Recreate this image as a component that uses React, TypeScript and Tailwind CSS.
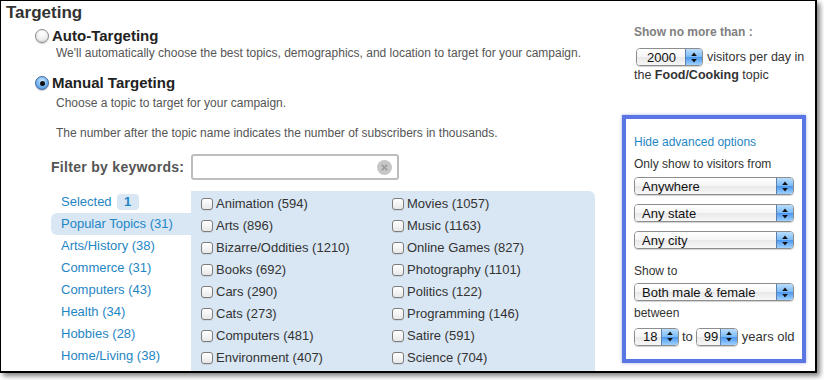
import React from "react";

const leftTopics = [
  "Animation (594)",
  "Arts (896)",
  "Bizarre/Oddities (1210)",
  "Books (692)",
  "Cars (290)",
  "Cats (273)",
  "Computers (481)",
  "Environment (407)",
];

const rightTopics = [
  "Movies (1057)",
  "Music (1163)",
  "Online Games (827)",
  "Photography (1101)",
  "Politics (122)",
  "Programming (146)",
  "Satire (591)",
  "Science (704)",
];

const categories = [
  "Arts/History (38)",
  "Commerce (31)",
  "Computers (43)",
  "Health (34)",
  "Hobbies (28)",
  "Home/Living (38)",
];

function Stepper() {
  return (
    <div className="w-[17px] h-full flex items-center justify-center border-l border-[#5d7fae] bg-[linear-gradient(to_bottom,#b9ddfc_0%,#7dbcf7_48%,#4c97ee_52%,#9fd2ff_100%)]">
      <svg width="6" height="11" viewBox="0 0 6 11">
        <path d="M3 0.5 L5.8 4 L0.2 4 Z" fill="#111" />
        <path d="M3 10.5 L5.8 7 L0.2 7 Z" fill="#111" />
      </svg>
    </div>
  );
}

function AquaSelect({ label, className, textClass }: { label: string; className: string; textClass?: string }) {
  return (
    <div
      className={`flex shrink-0 h-[18px] rounded-[4px] border border-[#8d8d8d] overflow-hidden shadow-[0_1px_1px_rgba(0,0,0,0.18)] ${className}`}
    >
      <div
        className={`flex-1 flex items-center text-[13px] leading-none text-[#111] whitespace-nowrap bg-[linear-gradient(to_bottom,#ffffff_0%,#f6f6f6_48%,#e9e9e9_52%,#f7f7f7_100%)] ${textClass ?? "pl-[7px]"}`}
      >
        {label}
      </div>
      <Stepper />
    </div>
  );
}

function Checkbox() {
  return (
    <span className="w-[12px] h-[12px] shrink-0 rounded-[3px] border border-[#7d7d7d] bg-[linear-gradient(to_bottom,#ffffff,#e8e8e8)] shadow-[0_1px_0_rgba(0,0,0,0.08)]" />
  );
}

export default function App() {
  return (
    <div
      className="w-[824px] h-[380px] bg-white overflow-hidden"
      style={{ fontFamily: '"Liberation Sans", Arial, sans-serif' }}
    >
      <div className="w-[817px] h-[373px] border-l border-t border-r-2 border-b-2 border-black bg-white overflow-hidden flex shadow-[3px_3px_5px_rgba(0,0,0,0.5)]">
        {/* Left column */}
        <div className="w-[594px] shrink-0 flex flex-col">
          <div className="pl-[5px] pt-[2px] h-[26px] text-[17px] leading-[20px] font-bold text-[#333]">
            Targeting
          </div>

          <div className="pl-[34px] flex items-center h-[18px] gap-[3px]">
            <span className="w-[14px] h-[14px] rounded-full border border-[#8a8a8a] bg-[radial-gradient(circle_at_50%_30%,#ffffff_0%,#eeeeee_55%,#c9c9c9_100%)] shadow-[0_1px_1px_rgba(0,0,0,0.2)]" />
            <span className="text-[15px] font-bold text-[#222]">Auto-Targeting</span>
          </div>
          <div className="pl-[55px] h-[16px] text-[12px] leading-[16px] text-[#555]">
            We'll automatically choose the best topics, demographics, and location to target for your campaign.
          </div>

          <div className="mt-[13px] pl-[34px] flex items-center h-[18px] gap-[3px]">
            <span className="w-[14px] h-[14px] rounded-full border border-[#44689c] flex items-center justify-center bg-[radial-gradient(circle_at_50%_35%,#d4ecff_0%,#7ab9f2_50%,#3a82da_100%)] shadow-[0_1px_1px_rgba(0,0,0,0.2)]">
              <span className="w-[5px] h-[5px] rounded-full bg-[#111]" />
            </span>
            <span className="text-[15px] font-bold text-[#222]">Manual Targeting</span>
          </div>
          <div className="mt-[3px] pl-[55px] h-[16px] text-[12px] leading-[16px] text-[#555]">
            Choose a topic to target for your campaign.
          </div>
          <div className="mt-[14px] pl-[55px] h-[16px] text-[12px] leading-[16px] text-[#555]">
            The number after the topic name indicates the number of subscribers in thousands.
          </div>

          <div className="mt-[13px] flex items-center h-[26px]">
            <span className="pl-[50px] w-[190px] text-[14px] font-bold text-[#555] tracking-[0.3px]">
              Filter by keywords:
            </span>
            <div className="w-[208px] h-[26px] rounded-[3px] border-2 border-[#bdbdbd] bg-white flex items-center justify-end pr-[5px]">
              <svg width="15" height="15" viewBox="0 0 15 15">
                <circle cx="7.5" cy="7.5" r="7.5" fill="#c6c6c6" />
                <path d="M4.8 4.8 L10.2 10.2 M10.2 4.8 L4.8 10.2" stroke="#9a9a9a" strokeWidth="1.6" />
              </svg>
            </div>
          </div>

          <div className="mt-[11px] flex flex-1">
            {/* Category nav */}
            <div className="pl-[50px] w-[190px] shrink-0 flex flex-col text-[13px] text-[#1f86c4]">
              <div className="h-[22px] flex items-center pl-[10px]">
                <span>Selected</span>
                <span className="ml-[5px] h-[16px] w-[22px] rounded-[4px] bg-[#d9e7f4] flex items-center justify-center font-bold text-[13px]">
                  1
                </span>
              </div>
              <div className="h-[22px] flex items-center pl-[10px] rounded-l-[6px] bg-[#d9e7f4]">
                Popular Topics (31)
              </div>
              {categories.map((c) => (
                <div key={c} className="h-[22px] flex items-center pl-[10px]">
                  {c}
                </div>
              ))}
            </div>

            {/* Topic panel */}
            <div className="flex-1 bg-[#d9e7f4] rounded-tr-[6px] pl-[10px] pt-[2px] flex text-[13px] text-[#333]">
              <div className="w-[191px] flex flex-col">
                {leftTopics.map((t) => (
                  <div key={t} className="h-[22px] flex items-center gap-[3px]">
                    <Checkbox />
                    <span>{t}</span>
                  </div>
                ))}
              </div>
              <div className="flex flex-col">
                {rightTopics.map((t) => (
                  <div key={t} className="h-[22px] flex items-center gap-[3px]">
                    <Checkbox />
                    <span>{t}</span>
                  </div>
                ))}
              </div>
            </div>
          </div>
        </div>

        {/* Right column */}
        <div className="ml-[27px] w-[184px] shrink-0 flex flex-col">
          <div className="pl-[12px] mt-[23px] h-[16px] text-[12px] leading-[16px] font-bold text-[#808080]">
            Show no more than :
          </div>
          <div className="pl-[14px] mt-[8px] h-[18px] flex items-center gap-[4px] text-[12.5px] text-[#333] whitespace-nowrap">
            <AquaSelect label="2000" className="w-[67px]" textClass="pl-[10px]" />
            <span>visitors per day in</span>
          </div>
          <div className="pl-[12px] mt-[1px] h-[16px] text-[12.5px] leading-[16px] text-[#333] whitespace-nowrap">
            the <b>Food/Cooking</b> topic
          </div>

          <div className="mt-[32px] w-[184px] h-[248px] border-[4px] border-[#5a76e4] shadow-[0_0_3px_rgba(60,80,200,0.45)] pl-[8px] pt-[15px] flex flex-col text-[12px] text-[#333]">
            <div className="h-[16px] leading-[16px] text-[#1f86c4]">Hide advanced options</div>
            <div className="mt-[6px] h-[16px] leading-[16px]">Only show to visitors from</div>
            <AquaSelect label="Anywhere" className="mt-[5px] w-[160px]" />
            <AquaSelect label="Any state" className="mt-[9px] w-[160px]" />
            <AquaSelect label="Any city" className="mt-[9px] w-[160px]" />
            <div className="mt-[14px] h-[16px] leading-[16px]">Show to</div>
            <AquaSelect label="Both male & female" className="mt-[4px] w-[160px]" />
            <div className="mt-[4px] h-[16px] leading-[16px]">between</div>
            <div className="mt-[6px] flex items-center text-[13px]">
              <AquaSelect label="18" className="w-[45px]" textClass="pl-[8px]" />
              <span className="ml-[3px]">to</span>
              <AquaSelect label="99" className="ml-[3px] w-[42px]" textClass="pl-[7px]" />
              <span className="ml-[4px]">years old</span>
            </div>
          </div>
        </div>
      </div>
    </div>
  );
}
